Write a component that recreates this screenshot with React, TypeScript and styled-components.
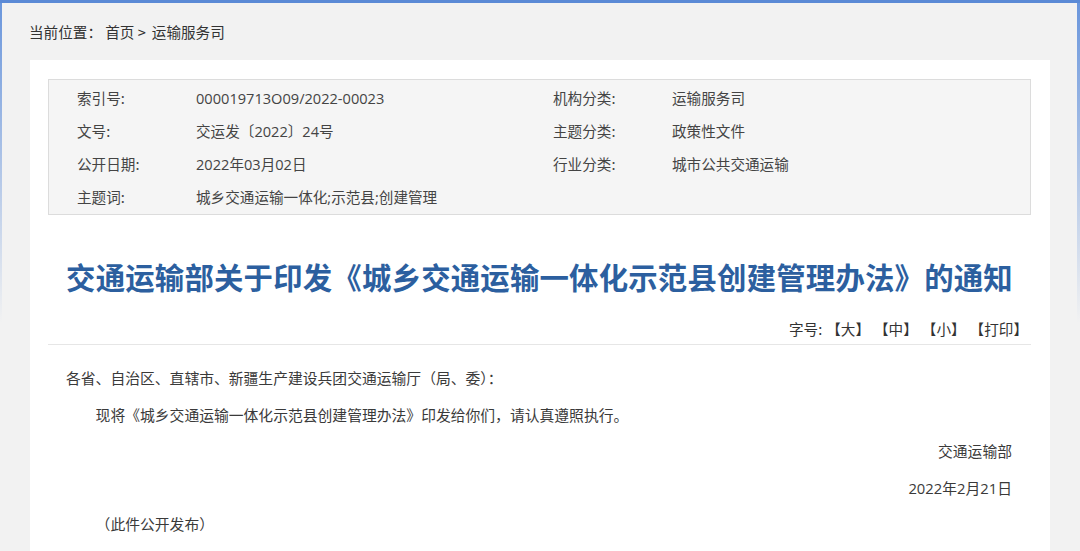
import React from "react";
import styled, { createGlobalStyle } from "styled-components";

const Global = createGlobalStyle`
  html, body { margin: 0; padding: 0; }
  body {
    background: #f2f2f2;
    font-family: "Open Sans", "Noto Sans CJK SC", sans-serif;
    color: #333;
  }
`;

const Page = styled.div`
  width: 1080px;
  height: 551px;
  overflow: hidden;
  box-sizing: border-box;
  border-top: 3px solid #5b8ad6;
  background:
    linear-gradient(to bottom, #6a96dc, rgba(106, 150, 220, 0) 320px) left top / 2px 100% no-repeat,
    linear-gradient(to bottom, #6a96dc, rgba(106, 150, 220, 0) 320px) right top / 3px 100% no-repeat,
    #f2f2f2;
`;

const Crumb = styled.div`
  height: 57px;
  box-sizing: border-box;
  padding: 19px 0 0 29px;
  font-size: 14.6px;
  line-height: 20px;
  color: #333;
  font-family: "Noto Sans CJK SC", sans-serif;
`;

const CrumbSep = styled.span`
  margin: 0 6px 0 0;
`;

const Panel = styled.div`
  margin-left: 30px;
  width: 1020px;
  height: 500px;
  box-sizing: border-box;
  background: #fff;
  padding: 19px 19px 0 18px;
`;

const InfoBox = styled.div`
  border: 1px solid #dcdcdc;
  background: #f5f5f5;
  padding: 1px 0 1px 28px;
  display: grid;
  grid-template-columns: 119px 357px 119px 1fr;
  grid-auto-rows: 33px;
  align-items: center;
  font-size: 14.6px;
  font-family: "Open Sans", "Noto Sans CJK SC", sans-serif;
`;

const Label = styled.span`
  color: #444;
  font-family: "Noto Sans CJK SC", sans-serif;
`;

const Value = styled.span`
  color: #444;
`;

const Title = styled.h1`
  margin: 41px 0 0;
  text-align: center;
  font-family: "Noto Sans CJK SC", sans-serif;
  font-weight: 700;
  font-size: 29.4px;
  line-height: 40px;
  letter-spacing: 0.2px;
  color: #2c5f9f;
`;

const Tools = styled.div`
  margin-top: 23px;
  padding: 0 3px 5px 0;
  border-bottom: 1px solid #e6e6e6;
  display: flex;
  justify-content: flex-end;
  gap: 4px;
  font-size: 14.6px;
  line-height: 20px;
  font-family: "Noto Sans CJK SC", sans-serif;
  color: #333;
`;

const ToolLink = styled.span`
  cursor: pointer;
  color: #333;
`;

const Body = styled.div`
  padding: 15px 19px 0 18px;
  font-size: 14.8px;
  font-family: "Open Sans", "Noto Sans CJK SC", sans-serif;
  color: #3a3a3a;
`;

const Para = styled.p<{ $indent?: boolean; $right?: boolean }>`
  margin: 0;
  line-height: 36.5px;
  text-indent: ${(p) => (p.$indent ? "2em" : "0")};
  text-align: ${(p) => (p.$right ? "right" : "left")};
`;

const rows: [string, string, string?, string?][] = [
  ["索引号:", "000019713O09/2022-00023", "机构分类:", "运输服务司"],
  ["文号:", "交运发〔2022〕24号", "主题分类:", "政策性文件"],
  ["公开日期:", "2022年03月02日", "行业分类:", "城市公共交通运输"],
  ["主题词:", "城乡交通运输一体化;示范县;创建管理"],
];

export default function App() {
  return (
    <Page>
      <Global />
      <Crumb>
        当前位置：&nbsp;首页 <CrumbSep>&gt;</CrumbSep>运输服务司
      </Crumb>
      <Panel>
        <InfoBox>
          {rows.map((r, i) => (
            <React.Fragment key={i}>
              <Label>{r[0]}</Label>
              <Value>{r[1]}</Value>
              {r[2] ? <Label>{r[2]}</Label> : <span />}
              {r[3] ? <Value>{r[3]}</Value> : <span />}
            </React.Fragment>
          ))}
        </InfoBox>
        <Title>交通运输部关于印发《城乡交通运输一体化示范县创建管理办法》的通知</Title>
        <Tools>
          <span>字号:</span>
          <ToolLink>【大】</ToolLink>
          <ToolLink>【中】</ToolLink>
          <ToolLink>【小】</ToolLink>
          <ToolLink>【打印】</ToolLink>
        </Tools>
        <Body>
          <Para>各省、自治区、直辖市、新疆生产建设兵团交通运输厅（局、委）：</Para>
          <Para $indent>现将《城乡交通运输一体化示范县创建管理办法》印发给你们，请认真遵照执行。</Para>
          <Para $right>交通运输部</Para>
          <Para $right>2022年2月21日</Para>
          <Para $indent>（此件公开发布）</Para>
        </Body>
      </Panel>
    </Page>
  );
}
